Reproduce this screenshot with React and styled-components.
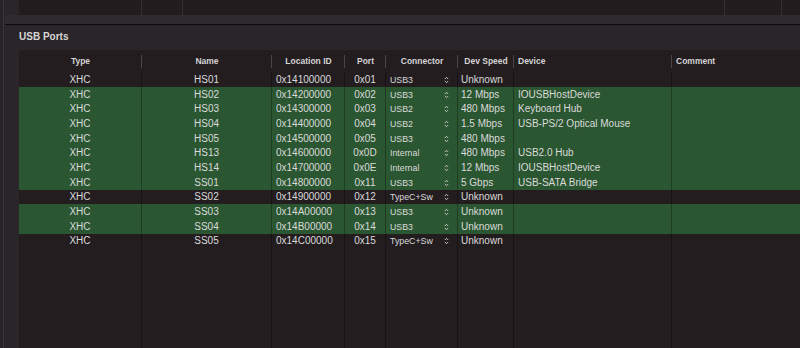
import React from "react";
import styled, { createGlobalStyle } from "styled-components";

const GlobalStyle = createGlobalStyle`
  html, body, #root {
    margin: 0;
    height: 100%;
    overflow: hidden;
  }
  body {
    background: #2a2528;
    font-family: "Liberation Sans", Arial, sans-serif;
    color: #dadada;
  }
`;

const COLS = "123px 130px 73px 41px 72px 56px 158px 1fr";

const Page = styled("div")`
  height: 100%;
  padding-left: 3px;
  background: #282326;
  box-sizing: border-box;
`;

const Main = styled("div")`
  height: 100%;
  border-left: 1px solid #3a3538;
  background: #2a2528;
  display: flex;
  flex-direction: column;
`;

const UpperTable = styled("div")`
  height: 15px;
  margin-left: 15px;
  background: #221c1f;
  display: grid;
  grid-template-columns: 123px 41px 542px 57px 1fr;
`;

const UpperCell = styled("div")`
  border-right: ${(p) => (p.last ? "none" : "1px solid #352f32")};
`;

const Band = styled("div")`
  height: 9px;
  margin-left: 1px;
  background: #2f2a2d;
  border-bottom: 1px solid #0c0a0b;
`;

const Section = styled("div")`
  flex: 1;
  display: flex;
  flex-direction: column;
  padding: 6px 0 0 15px;
  min-height: 0;
`;

const Title = styled("div")`
  height: 12px;
  line-height: 12px;
  font-size: 10px;
  font-weight: 700;
  color: #d6d6d6;
  margin-bottom: 7px;
`;

const Table = styled("div")`
  flex: 1;
  display: flex;
  flex-direction: column;
  background: #231d20;
  min-height: 0;
`;

const HeaderRow = styled("div")`
  display: grid;
  grid-template-columns: ${COLS};
  height: 22px;
`;

const HeadCell = styled("div")`
  position: relative;
  display: flex;
  align-items: center;
  justify-content: ${(p) => (p.align === "left" ? "flex-start" : "center")};
  padding-left: ${(p) => (p.align === "left" ? "4px" : "0")};
  font-size: 8.5px;
  font-weight: 700;
  color: #d4d4d4;
  &::after {
    content: "";
    display: ${(p) => (p.last ? "none" : "block")};
    position: absolute;
    right: 0;
    top: 5px;
    bottom: 4px;
    width: 1px;
    background: #4a4548;
  }
`;

const Row = styled("div")`
  display: grid;
  grid-template-columns: ${COLS};
  height: 14.7px;
  background: ${(p) => (p.active ? "#2a5631" : "transparent")};
`;

const Filler = styled("div")`
  flex: 1;
  display: grid;
  grid-template-columns: ${COLS};
`;

const Cell = styled("div")`
  display: flex;
  align-items: center;
  justify-content: ${(p) => (p.align === "left" ? "flex-start" : "center")};
  padding-left: ${(p) => (p.align === "left" ? (p.pad || 4) + "px" : "0")};
  font-size: 10px;
  white-space: nowrap;
  overflow: hidden;
  border-right: ${(p) => (p.last ? "none" : "1px solid rgba(0, 0, 0, 0.3)")};
`;

const ConnectorCell = styled(Cell)`
  justify-content: space-between;
  padding: 1px 8px 0 4px;
  font-size: 8.8px;
`;

const Stepper = () => (
  <svg width="5" height="8" viewBox="0 0 5 8">
    <path d="M0.8 3 L2.5 1.3 L4.2 3" stroke="#c9c9c9" strokeWidth="1" fill="none" />
    <path d="M0.8 5 L2.5 6.7 L4.2 5" stroke="#c9c9c9" strokeWidth="1" fill="none" />
  </svg>
);

const ports = [
  ["HS01", "0x14100000", "0x01", "USB3", "Unknown", "", false],
  ["HS02", "0x14200000", "0x02", "USB3", "12 Mbps", "IOUSBHostDevice", true],
  ["HS03", "0x14300000", "0x03", "USB2", "480 Mbps", "Keyboard Hub", true],
  ["HS04", "0x14400000", "0x04", "USB2", "1.5 Mbps", "USB-PS/2 Optical Mouse", true],
  ["HS05", "0x14500000", "0x05", "USB3", "480 Mbps", "", true],
  ["HS13", "0x14600000", "0x0D", "Internal", "480 Mbps", "USB2.0 Hub", true],
  ["HS14", "0x14700000", "0x0E", "Internal", "12 Mbps", "IOUSBHostDevice", true],
  ["SS01", "0x14800000", "0x11", "USB3", "5 Gbps", "USB-SATA Bridge", true],
  ["SS02", "0x14900000", "0x12", "TypeC+Sw", "Unknown", "", false],
  ["SS03", "0x14A00000", "0x13", "USB3", "Unknown", "", true],
  ["SS04", "0x14B00000", "0x14", "USB3", "Unknown", "", true],
  ["SS05", "0x14C00000", "0x15", "TypeC+Sw", "Unknown", "", false],
];

export default function App() {
  return (
    <Page>
      <GlobalStyle />
      <Main>
        <UpperTable>
          <UpperCell />
          <UpperCell />
          <UpperCell />
          <UpperCell />
          <UpperCell last />
        </UpperTable>
        <Band />
        <Section>
          <Title>USB Ports</Title>
          <Table>
            <HeaderRow>
              <HeadCell>Type</HeadCell>
              <HeadCell>Name</HeadCell>
              <HeadCell>Location ID</HeadCell>
              <HeadCell>Port</HeadCell>
              <HeadCell>Connector</HeadCell>
              <HeadCell>Dev Speed</HeadCell>
              <HeadCell align="left">Device</HeadCell>
              <HeadCell align="left" last>Comment</HeadCell>
            </HeaderRow>
            {ports.map(([name, loc, port, conn, speed, device, active]) => (
              <Row key={name} active={active}>
                <Cell>XHC</Cell>
                <Cell>{name}</Cell>
                <Cell align="left">{loc}</Cell>
                <Cell>{port}</Cell>
                <ConnectorCell>
                  <span>{conn}</span>
                  <Stepper />
                </ConnectorCell>
                <Cell align="left" pad={3}>{speed}</Cell>
                <Cell align="left">{device}</Cell>
                <Cell last />
              </Row>
            ))}
            <Filler>
              <Cell />
              <Cell />
              <Cell />
              <Cell />
              <Cell />
              <Cell />
              <Cell />
              <Cell last />
            </Filler>
          </Table>
        </Section>
      </Main>
    </Page>
  );
}
